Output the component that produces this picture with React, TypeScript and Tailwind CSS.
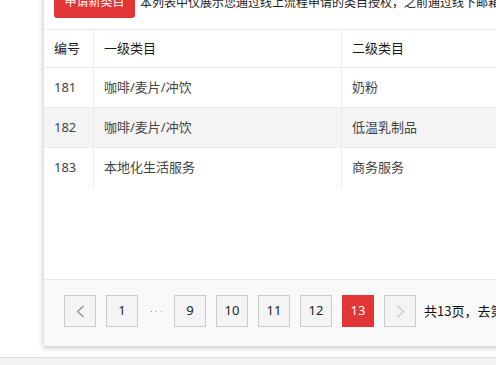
import React from "react";

const rows = [
  { id: "181", a: "咖啡/麦片/冲饮", b: "奶粉", bg: "bg-white" },
  { id: "182", a: "咖啡/麦片/冲饮", b: "低温乳制品", bg: "bg-[#f4f4f4]" },
  { id: "183", a: "本地化生活服务", b: "商务服务", bg: "bg-white" },
];

function Chevron({ dir, color }: { dir: "l" | "r"; color: string }) {
  return (
    <svg width="9" height="13" viewBox="0 0 9 13" fill="none">
      {dir === "l" ? (
        <polyline points="7.5,1 1.5,6.5 7.5,12" stroke={color} strokeWidth="1.1" />
      ) : (
        <polyline points="1.5,1 7.5,6.5 1.5,12" stroke={color} strokeWidth="1.1" />
      )}
    </svg>
  );
}

function PageBtn({ children, active }: { children: React.ReactNode; active?: boolean }) {
  return (
    <div
      className={
        active
          ? "w-[32px] h-[32px] flex items-center justify-center bg-[#e23636] border border-[#e23636] text-white text-[13px]"
          : "w-[32px] h-[32px] flex items-center justify-center bg-[#f4f4f4] border border-[#cccccc] text-[#222] text-[13px]"
      }
    >
      {children}
    </div>
  );
}

export default function App() {
  return (
    <div
      className="w-[496px] h-[365px] overflow-hidden bg-white flex flex-col"
      style={{ fontFamily: '"Noto Sans", "Noto Sans CJK SC", sans-serif' }}
    >
      <div className="h-[357px] pl-[43px] overflow-hidden">
        <div className="w-[620px] h-[360px] -mt-[14px] bg-white border-l border-[#e4e4e4] shadow-[0_2px_5px_rgba(0,0,0,0.22)] flex flex-col">
          <div className="h-[44px] shrink-0 flex items-start pl-[10px] border-b border-[#ebebeb] whitespace-nowrap">
            <div className="h-[32px] w-[81px] rounded-b-[3px] rounded-t-[2px] bg-[#e23636] text-white text-[12px] flex items-center justify-center leading-none">
              申请新类目
            </div>
            <div className="ml-[5px] mt-[11px] text-[12px] leading-none text-[#222]">
              本列表中仅展示您通过线上流程申请的类目授权，之前通过线下邮箱申请的类目授权请联系运营
            </div>
          </div>
          <div className="flex-1 flex flex-col">
            <div className="h-[38px] flex border-b border-[#ebebeb] text-[13px] text-[#1a1a1a]">
              <div className="w-[50px] pl-[10px] flex items-center border-r border-[#ebebeb]">编号</div>
              <div className="w-[248px] pl-[10px] flex items-center border-r border-[#ebebeb]">一级类目</div>
              <div className="flex-1 pl-[10px] flex items-center">二级类目</div>
            </div>
            {rows.map((r, i) => (
              <div
                key={r.id}
                className={`h-[40px] flex text-[13px] text-[#444] ${r.bg} ${i < 2 ? "border-b border-[#ebebeb]" : ""}`}
              >
                <div className="w-[50px] pl-[10px] flex items-center border-r border-[#ebebeb]">{r.id}</div>
                <div className="w-[248px] pl-[10px] flex items-center border-r border-[#ebebeb]">{r.a}</div>
                <div className="flex-1 pl-[10px] flex items-center">{r.b}</div>
              </div>
            ))}
          </div>
          <div className="h-[67px] shrink-0 bg-[#f9f9f9] border-t border-[#e8e8e8] pt-[15px] pl-[20px] flex items-start gap-[10px] whitespace-nowrap">
            <PageBtn>
              <Chevron dir="l" color="#888" />
            </PageBtn>
            <PageBtn>1</PageBtn>
            <div className="w-[16px] h-[32px] flex items-center justify-center gap-[4px]">
              <span className="w-[1px] h-[1px] bg-[#999]" />
              <span className="w-[1px] h-[1px] bg-[#999]" />
              <span className="w-[1px] h-[1px] bg-[#999]" />
            </div>
            <PageBtn>9</PageBtn>
            <PageBtn>10</PageBtn>
            <PageBtn>11</PageBtn>
            <PageBtn>12</PageBtn>
            <PageBtn active>13</PageBtn>
            <PageBtn>
              <Chevron dir="r" color="#c4c4c4" />
            </PageBtn>
            <div
              className="h-[32px] -ml-[2px] flex items-center text-[13px] text-[#111]"
              style={{ fontFamily: '"Noto Sans CJK SC", sans-serif' }}
            >
              共13页，去第
            </div>
          </div>
        </div>
      </div>
      <div className="flex-1 bg-[#f3f3f3] border-t border-[#dddddd]" />
    </div>
  );
}
